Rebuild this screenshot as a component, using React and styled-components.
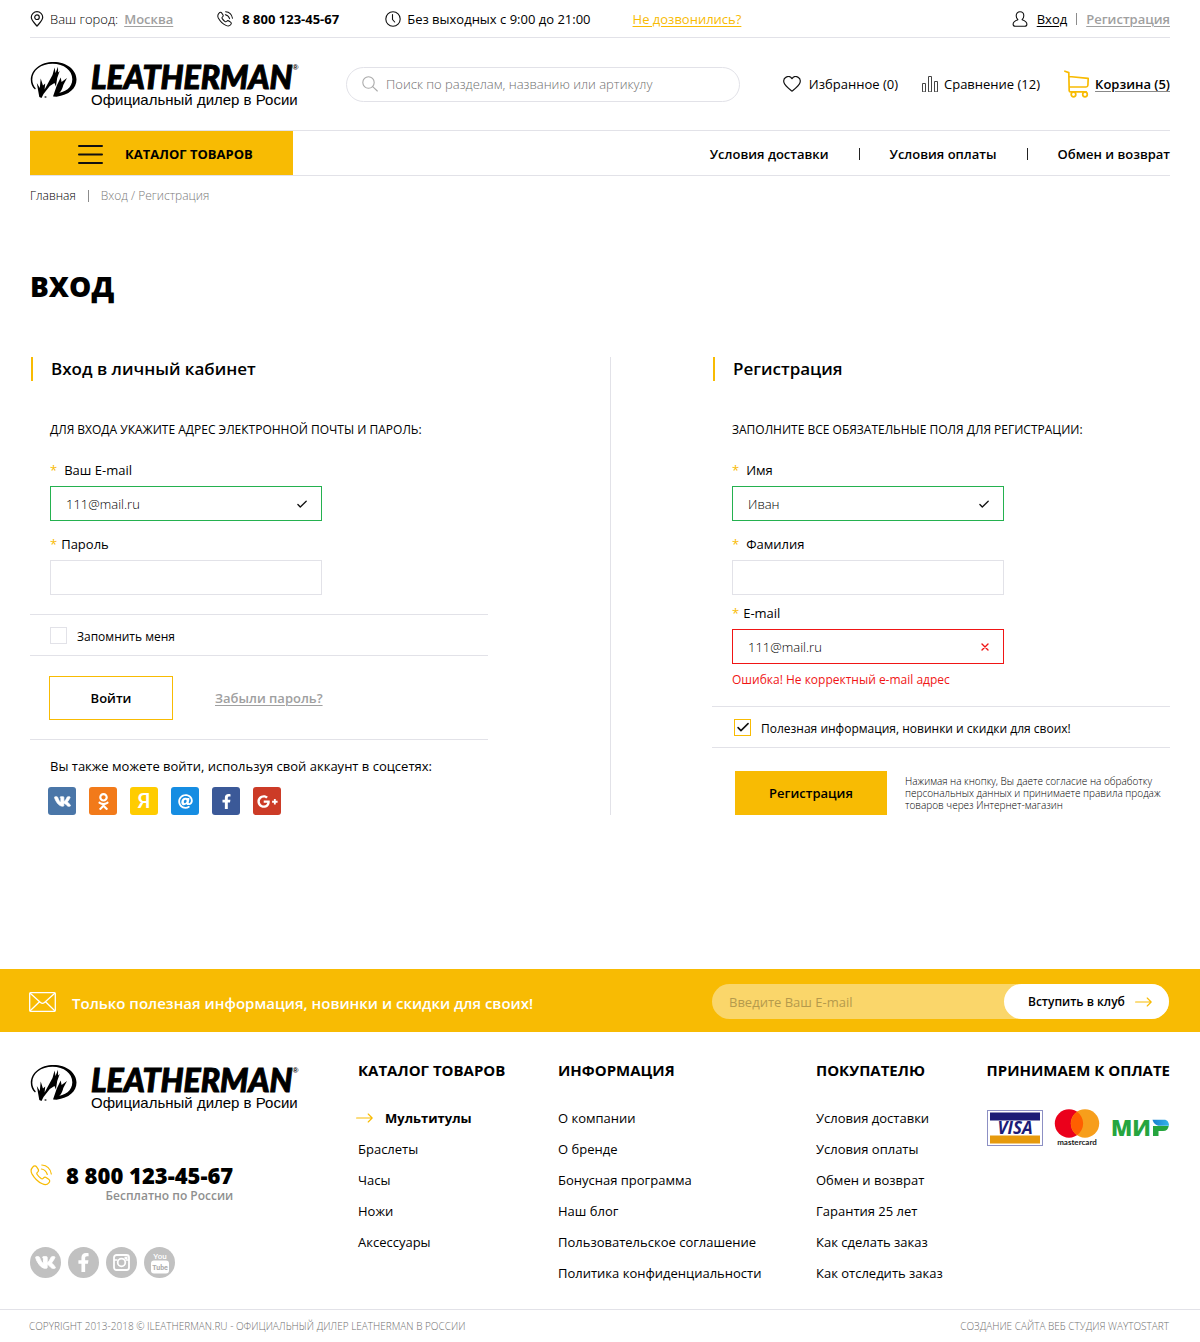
import React from "react";
import styled, { createGlobalStyle } from "styled-components";
import {
  FaVk,
  FaOdnoklassniki,
  FaAt,
  FaFacebookF,
  FaGooglePlusG,
} from "react-icons/fa";

const color = {
  text: "#000",
  muted: "#a0a0a0",
  line: "#e2e2e8",
  brand: "#f8bb03",
  ok: "#24b14f",
  error: "#f01515",
};

const GlobalStyle = createGlobalStyle`
  *, *::before, *::after { box-sizing: border-box; }
  body {
    margin: 0;
    background: #fff;
    color: ${color.text};
    font: 400 13px/20px "Open Sans", "Noto Sans", sans-serif;
  }
  h1, h2, h3, p, ul { margin: 0; padding: 0; }
  ul { list-style: none; }
  button, input { font: inherit; color: inherit; }
  svg { display: block; flex: none; }
`;

const Container = styled.div`
  padding: 0 30px;
`;

const Link = styled.a`
  color: ${(p) => p.$color || "inherit"};
  font-weight: ${(p) => p.$weight || 400};
  text-decoration: ${(p) => (p.$underline ? "underline" : "none")};
  text-decoration-thickness: 1px;
  text-underline-offset: 2px;
`;

/* ---------- top bar ---------- */

const TopBar = styled.div`
  display: flex;
  align-items: center;
  height: 38px;
  border-bottom: 1px solid ${color.line};
`;

const TopItem = styled.div`
  display: flex;
  align-items: center;
  gap: ${(p) => p.$gap}px;
  margin-right: ${(p) => p.$after || 0}px;
  white-space: nowrap;
`;

const Account = styled.div`
  display: flex;
  align-items: center;
  gap: 9px;
  margin-left: auto;
`;

const Separator = styled.span`
  width: 1px;
  height: ${(p) => p.$height || 12}px;
  background: ${(p) => p.$color || "#8c8c8c"};
`;

const Strong = styled.span`
  font-weight: 700;
`;

/* ---------- header ---------- */

const HeaderRow = styled.div`
  display: flex;
  align-items: center;
  height: 92px;
`;

const LogoLink = styled.a`
  display: flex;
  align-items: flex-start;
  gap: 14px;
  width: 273px;
  color: #000;
  text-decoration: none;
`;

const LogoText = styled.span`
  display: block;
`;

const Wordmark = styled.span`
  display: flex;
  align-items: flex-start;
  font: italic 900 32px/32px Lato, sans-serif;
  -webkit-text-stroke: 1px #000;
`;

const Registered = styled.sup`
  font: 700 8px/14px "Liberation Sans", sans-serif;
  -webkit-text-stroke: 0;
`;

const Tagline = styled.span`
  display: block;
  font: 400 15px/14px "Liberation Sans", Arial, sans-serif;
  white-space: nowrap;
`;

const Search = styled.form`
  display: flex;
  align-items: center;
  gap: 8px;
  flex: 0 1 394px;
  height: 35px;
  margin-left: 43px;
  padding: 0 15px;
  border: 1px solid ${color.line};
  border-radius: 18px;
`;

const SearchInput = styled.input`
  flex: 1;
  min-width: 0;
  padding: 0;
  border: 0;
  outline: 0;
  background: none;
  font-weight: 300;
  &::placeholder { color: #6f6f6f; opacity: 1; }
`;

const Tools = styled.div`
  display: flex;
  align-items: center;
  gap: 24px;
  margin-left: auto;
`;

const Tool = styled(Link)`
  display: flex;
  align-items: center;
  gap: ${(p) => p.$gap}px;
  white-space: nowrap;
`;

const Underlined = styled.span`
  text-decoration: underline;
  text-decoration-color: #888;
  text-underline-offset: 2px;
`;

/* ---------- navigation ---------- */

const NavBar = styled.div`
  display: flex;
  align-items: center;
  justify-content: space-between;
  height: 46px;
  border: solid ${color.line};
  border-width: 1px 0;
`;

const CatalogButton = styled.button`
  display: flex;
  align-items: center;
  gap: 22px;
  width: 263px;
  height: 44px;
  padding: 2px 48px 0;
  border: 0;
  background: ${color.brand};
  font-weight: 700;
  white-space: nowrap;
`;

const NavLinks = styled.nav`
  display: flex;
  align-items: center;
  gap: 30px;
  padding-top: 2px;
`;

const Crumbs = styled.nav`
  display: flex;
  align-items: center;
  gap: 12px;
  padding-top: 10px;
  font-size: 12px;
`;

/* ---------- forms ---------- */

const PageTitle = styled.h1`
  margin: 60px 0 51px;
  font-size: 28px;
  line-height: 40px;
  font-weight: 800;
`;

const Columns = styled.div`
  display: flex;
  padding-bottom: 154px;
`;

const Panel = styled.section`
  flex: 1;
  min-width: 0;
`;

const Divider = styled.div`
  width: 1px;
  margin: 0 101px 0 122px;
  background: ${color.line};
`;

const PanelTitle = styled.h2`
  margin-left: 1px;
  padding-left: 18px;
  border-left: 2px solid ${color.brand};
  font-size: 17px;
  line-height: 24px;
  font-weight: 600;
`;

const Hint = styled.p`
  margin: 39px 0 20px;
  padding-left: 20px;
  font-size: 12px;
  text-transform: uppercase;
  white-space: nowrap;
`;

const Fields = styled.div`
  padding-left: 20px;
`;

const Field = styled.div`
  width: 272px;
  margin-top: ${(p) => p.$before || 0}px;
`;

const Label = styled.label`
  display: flex;
  gap: ${(p) => p.$gap}px;
  margin-bottom: 6px;
`;

const Star = styled.span`
  color: ${color.brand};
`;

const InputBox = styled.div`
  display: flex;
  align-items: center;
  height: 35px;
  padding: 0 14px 0 15px;
  border: 1px solid ${(p) => p.$border || color.line};
`;

const TextInput = styled.input`
  flex: 1;
  min-width: 0;
  padding: 0;
  border: 0;
  outline: 0;
  background: none;
  font-weight: 300;
`;

const ErrorText = styled.p`
  margin-top: 6px;
  color: ${color.error};
  font-size: 12px;
`;

const CheckRow = styled.label`
  display: flex;
  align-items: center;
  gap: 10px;
  height: 42px;
  margin-top: ${(p) => p.$before}px;
  padding-left: ${(p) => p.$indent}px;
  border: solid ${color.line};
  border-width: 1px 0;
  font-size: 12px;
`;

const CheckBox = styled.span`
  display: grid;
  place-items: center;
  > * { grid-area: 1 / 1; }
  > svg { pointer-events: none; }
`;

const CheckText = styled.span`
  padding-top: 3px;
`;

const CheckInput = styled.input`
  appearance: none;
  width: 17px;
  height: 17px;
  margin: 0;
  border: 1px solid ${color.line};
  background: #fff;
  &:checked { border-color: ${color.brand}; }
  & + svg { visibility: hidden; }
  &:checked + svg { visibility: visible; }
`;

const LoginActions = styled.div`
  display: flex;
  align-items: center;
  gap: 42px;
  padding: 20px 0 19px 19px;
  border-bottom: 1px solid ${color.line};
`;

const SignupActions = styled.div`
  display: flex;
  align-items: center;
  gap: 18px;
  padding: 23px 0 0 23px;
`;

const Button = styled.button`
  flex: none;
  width: ${(p) => p.$width}px;
  height: 44px;
  border: 1px solid ${color.brand};
  background: ${(p) => (p.$filled ? color.brand : "#fff")};
  font-weight: 600;
`;

const Agreement = styled.p`
  font-size: 10px;
  line-height: 12px;
  font-weight: 300;
`;

const SocialHint = styled.p`
  margin: 16px 0 11px;
  padding-left: 20px;
`;

const SocialLogin = styled.div`
  display: flex;
  gap: 13px;
  padding-left: 18px;
`;

const SocialTile = styled.a`
  display: grid;
  place-items: center;
  width: 28px;
  height: 28px;
  border-radius: 3px;
  background: ${(p) => p.$bg};
  color: #fff;
  font: 500 21px/28px Roboto, sans-serif;
  text-decoration: none;
`;

const BoldVk = styled(FaVk)`
  stroke: currentColor;
  stroke-width: 26px;
  overflow: visible;
`;

/* ---------- subscription ---------- */

const Subscribe = styled.section`
  display: flex;
  align-items: center;
  height: 63px;
  padding: 2px 31px 0 29px;
  background: ${color.brand};
`;

const SubscribeText = styled.h2`
  margin-left: 16px;
  padding-top: 2px;
  color: #fff;
  font-size: 15px;
  line-height: 20px;
  font-weight: 600;
  white-space: nowrap;
`;

const SubscribeForm = styled.form`
  display: flex;
  flex: 0 1 457px;
  height: 35px;
  margin-left: auto;
  border-radius: 18px;
  background: #fad66a;
`;

const SubscribeInput = styled.input`
  flex: 1;
  min-width: 0;
  padding: 0 17px;
  border: 0;
  outline: 0;
  background: none;
  &::placeholder { color: #b59a4c; opacity: 1; }
`;

const JoinButton = styled.button`
  display: flex;
  align-items: center;
  gap: 10px;
  width: 165px;
  padding: 0 0 0 24px;
  border: 0;
  border-radius: 18px;
  background: #fff;
  font-size: 12px;
  font-weight: 600;
  white-space: nowrap;
`;

/* ---------- footer ---------- */

const FooterGrid = styled.div`
  display: grid;
  grid-template-columns: 328px 200px 258px 1fr auto;
  padding: 28px 30px 26px;
`;

const FooterContacts = styled.div`
  display: flex;
  flex-direction: column;
  align-items: flex-start;
  padding-top: 4px;
`;

const FooterPhone = styled.div`
  display: grid;
  grid-template-columns: auto auto;
  align-items: center;
  column-gap: 14px;
  margin-top: 51px;
`;

const PhoneNumber = styled.span`
  font-size: 22px;
  line-height: 28px;
  font-weight: 800;
`;

const PhoneNote = styled.span`
  grid-column: 2;
  color: #8f8f8f;
  font-size: 12px;
  line-height: 14px;
  font-weight: 600;
  text-align: right;
`;

const RoundLinks = styled.div`
  display: flex;
  gap: 7px;
  margin-top: 44px;
`;

const RoundLink = styled.a`
  display: grid;
  place-items: center;
  width: 31px;
  height: 31px;
  border-radius: 50%;
  background: #c1c1c1;
  color: #fff;
`;

const FooterTitle = styled.h3`
  margin-bottom: 28px;
  font-size: 15px;
  line-height: 20px;
  font-weight: 700;
  white-space: nowrap;
`;

const FooterList = styled.ul`
  display: grid;
  gap: 11px;
`;

const FooterItem = styled.li`
  display: flex;
  align-items: center;
  gap: 12px;
  margin-left: ${(p) => (p.$active ? -2 : 0)}px;
`;

const Payments = styled.div`
  display: flex;
  align-items: center;
  gap: 11px;
  margin-top: 29px;
`;

const Legal = styled.div`
  display: flex;
  justify-content: space-between;
  padding: 6px 31px 6px 29px;
  border-top: 1px solid ${color.line};
  color: #707070;
  font-size: 10px;
  font-weight: 300;
  text-transform: uppercase;
`;

/* ---------- icons ---------- */

const Stroke = ({ w, h, box, width = 1.1, stroke = "#111", children }) => (
  <svg
    width={w}
    height={h}
    viewBox={box || `0 0 ${w} ${h}`}
    fill="none"
    stroke={stroke}
    strokeWidth={width}
    strokeLinecap="round"
    strokeLinejoin="round"
    aria-hidden="true"
  >
    {children}
  </svg>
);

const PinIcon = () => (
  <Stroke w={14} h={16} width={1.2}>
    <path d="M7 15.2C4.500 12 1.300 9.200 1.300 6.200a5.700 5.500 0 0 1 11.400 0C12.700 9.200 9.500 12 7 15.200z" />
    <circle cx="7" cy="6.200" r="2.300" />
  </Stroke>
);

const PhoneIcon = ({ size = 16, stroke }) => (
  <Stroke w={size} h={size} box="0 0 22 22" stroke={stroke} width={size > 16 ? 1.2 : 1.4}>
    <path d="M2.800 3c1.400-1.600 2.900-1.400 3.800-.1l1.500 2.200c.8 1.200.5 2.100-.5 3-1 .8-1.100 1.400-.4 2.400 1 1.500 2.300 2.900 3.900 4 .9.600 1.500.5 2.300-.4.900-1 1.900-1.200 3-.4l2.300 1.600c1.200.9 1.400 2.100.1 3.600-1.600 2-3.700 2.300-6.500.9C8.200 18 4.200 13.900 1.800 9.600.5 7 .9 5 2.800 3z" />
    <path d="M11.500 5c3.100.6 5 2.500 5.800 5.500M11.800 1c5 .4 8.600 4 9.500 9" />
  </Stroke>
);

const ClockIcon = () => (
  <Stroke w={16} h={16}>
    <circle cx="8" cy="8" r="7.200" />
    <path d="M7.500 3.500v5l2.200 2.500" />
  </Stroke>
);

const UserIcon = () => (
  <Stroke w={16} h={16}>
    <path d="M8 .8c2.200 0 3.800 1.700 3.800 4 0 1.600-.7 3-1.700 3.900 2 .7 4.800 2 4.800 4.500 0 1.500-.8 2-2.200 2H3.300c-1.400 0-2.200-.5-2.200-2 0-2.500 2.800-3.800 4.800-4.500C4.900 7.800 4.200 6.400 4.200 4.800c0-2.300 1.600-4 3.800-4z" />
  </Stroke>
);

const SearchIcon = () => (
  <Stroke w={16} h={16} stroke="#aaa">
    <circle cx="6.500" cy="6.500" r="5.700" />
    <path d="M10.700 10.700l4.600 4.300" />
  </Stroke>
);

const HeartIcon = () => (
  <Stroke w={18} h={16} width={1.200}>
    <path d="M9 2.700C10.500.4 13.200.3 14.800 1.100c1.900.9 2.800 3.100 2.300 5.200-.8 3.200-5 6.300-8.100 8.800C5.900 12.600 1.700 9.500.9 6.300.4 4.200 1.300 2 3.200 1.100 4.800.3 7.500.4 9 2.700z" />
  </Stroke>
);

const BarsIcon = () => (
  <Stroke w={16} h={16} width={1} stroke="#444">
    <path d="M.5 15.500v-8h3v8zM6.500 15.500V.5h3v15zM12.500 15.500v-10h3v10z" />
  </Stroke>
);

const CartIcon = () => (
  <Stroke w={25} h={28} stroke={color.brand} width={1.700}>
    <path d="M.9 1.200l3.900 1.400.4 18.300M5 6.500l19.200 1.900-.3 6.900c-.1 1.200-.6 1.700-1.800 1.700H5.200M5.200 20.900c.1.700.4.900 1.200.9h15.800" />
    <circle cx="9.500" cy="24.500" r="2.300" />
    <circle cx="21" cy="24.500" r="2.300" />
  </Stroke>
);

const BurgerIcon = () => (
  <Stroke w={25} h={20} width={2}>
    <path d="M1 2h23M1 10.500h23M1 19h23" />
  </Stroke>
);

const CheckIcon = ({ w = 10, h = 8, width = 1.300 }) => (
  <Stroke w={w} h={h} box="0 0 10 8" width={width}>
    <path d="M.9 4.500l2.400 2.500L9.200 1.200" />
  </Stroke>
);

const CrossIcon = () => (
  <Stroke w={8} h={8} stroke="#f01515" width={1.400}>
    <path d="M1 1l6 6M7 1L1 7" />
  </Stroke>
);

const MailIcon = () => (
  <Stroke w={27} h={20} stroke="#fff" width={1.300}>
    <rect x=".7" y=".7" width="25.600" height="18.600" rx="1" />
    <path d="M1.200 1.200l10.300 9.300c1.300 1.200 2.700 1.200 4 0L25.800 1.200M1.200 18.800l9.300-9M25.800 18.800l-9.300-9" />
  </Stroke>
);

const ArrowIcon = () => (
  <Stroke w={17} h={10} stroke={color.brand}>
    <path d="M.6 5h15.600M12.200 1l4 4-4 4" />
  </Stroke>
);

const Emblem = () => (
  <svg width="47" height="38" viewBox="0 0 47 38" aria-hidden="true">
    <path
      fillRule="evenodd"
      d="M5 28.500C2 26 .8 22.500.8 18.800.8 8.800 10.500 1 23.500 1c13 0 23 7.800 23 17.500 0 9-7.500 15.500-20 17.200l-3-.2 1.500-3C35.500 31.500 42.300 26.500 42.300 18.200 42.300 9.500 34 2.800 22.500 2.800 11 2.800 2.300 9.500 2.300 18.600c0 3.400 1.200 6.400 3.500 8.900z"
    />
    <path d="M6.800 22l3 5 .9-9.500 2.300 7 2.200-2-.6 6L22.500 14l2.100-7.500.9 5.500L28 5.800l.1 5.700 1.600-1.500-2.500 7-1.300 8.500-1.400-3.500-4.700 3L13.500 33l-2 4-2.200-1z" />
    <path d="M23 35.500l3.800-11 3.900-8 .9 4.500 5.400-4-3.700 7c-1.300 5.500-3.500 9.500-10.300 11.500z" />
    <circle cx="15.500" cy="36" r="1.100" fill="#555" />
  </svg>
);

const InstagramIcon = () => (
  <svg width="17" height="17" viewBox="0 0 17 17" fill="none" stroke="#fff" aria-hidden="true">
    <rect x="1" y="1" width="15" height="15" rx="2.500" strokeWidth="1.800" />
    <path d="M1 6h3.500M12.500 6H16" strokeWidth="1.500" />
    <circle cx="8.500" cy="8.500" r="3.800" strokeWidth="1.800" />
    <rect x="11.500" y="2.700" width="3" height="2.500" fill="#fff" stroke="none" />
  </svg>
);

const YoutubeIcon = () => (
  <svg width="18" height="23" viewBox="0 0 18 23" aria-hidden="true">
    <text x="9" y="8" textAnchor="middle" fontFamily="Roboto, sans-serif" fontSize="8" fontWeight="500" fill="#fff">You</text>
    <rect x="0" y="9.500" width="18" height="13" rx="3" fill="#fff" />
    <text x="9" y="19" textAnchor="middle" fontFamily="Roboto, sans-serif" fontSize="7" fontWeight="700" fill="#ababab">Tube</text>
  </svg>
);

const VisaLogo = () => (
  <svg width="56" height="36" viewBox="0 0 56 36" role="img" aria-label="Visa">
    <rect x=".5" y=".5" width="55" height="35" fill="#fff" stroke="#8d90c4" />
    <rect x="3" y="2.500" width="50" height="8" fill="#1c1c76" />
    <rect x="3" y="25.500" width="50" height="8" fill="#e69a0c" />
    <text x="28" y="24" textAnchor="middle" fontFamily="Open Sans, sans-serif" fontStyle="italic" fontWeight="700" fontSize="17" fill="#1c1c76">VISA</text>
  </svg>
);

const MastercardLogo = () => (
  <svg width="46" height="38" viewBox="0 0 46 38" role="img" aria-label="Mastercard">
    <circle cx="15" cy="14.500" r="14.200" fill="#eb001b" />
    <circle cx="31" cy="14.500" r="14.200" fill="#f79e1b" />
    <path d="M23 2.800a14.200 14.200 0 0 1 0 23.400 14.200 14.200 0 0 1 0-23.400z" fill="#ff5f00" />
    <text x="23" y="36" textAnchor="middle" fontFamily="Lato, sans-serif" fontWeight="700" fontSize="8" fill="#1a1a1a">mastercard</text>
  </svg>
);

const MirLogo = () => (
  <svg width="58" height="26" viewBox="0 -4 58 26" role="img" aria-label="Мир">
    <defs>
      <linearGradient id="mir" x1="0" x2="1">
        <stop offset="0" stopColor="#1a7fd0" />
        <stop offset="1" stopColor="#35b5ea" />
      </linearGradient>
    </defs>
    <text x="0" y="17" fontFamily="Open Sans, sans-serif" fontWeight="800" fontSize="22" fill="#26a53f">МИ</text>
    <path d="M42 7v10h5.500V12h4.500c3.500 0 5.200-2 5.700-5z" fill="#26a53f" />
    <path d="M41.500 .8h11.500c3.500 0 5 2.700 5 6H48.500c-3.500 0-6-2.500-7-6z" fill="url(#mir)" />
  </svg>
);

/* ---------- composed parts ---------- */

const Logo = () => (
  <LogoLink href="#">
    <Emblem />
    <LogoText>
      <Wordmark>
        LEATHERMAN<Registered>®</Registered>
      </Wordmark>
      <Tagline>Официальный дилер в Росии</Tagline>
    </LogoText>
  </LogoLink>
);

const FormField = ({ id, label, gap = 7, type = "text", value = "", state, before, error }) => (
  <Field $before={before}>
    <Label htmlFor={id} $gap={gap}>
      <Star>*</Star>
      {label}
    </Label>
    <InputBox $border={color[state]}>
      <TextInput id={id} type={type} defaultValue={value} aria-invalid={state === "error"} />
      {state === "ok" && <CheckIcon />}
      {state === "error" && <CrossIcon />}
    </InputBox>
    {error && <ErrorText>{error}</ErrorText>}
  </Field>
);

const Check = ({ label, checked, before, indent }) => (
  <CheckRow $before={before} $indent={indent}>
    <CheckBox>
      <CheckInput type="checkbox" defaultChecked={checked} />
      <CheckIcon w={12} h={10} />
    </CheckBox>
    <CheckText>{label}</CheckText>
  </CheckRow>
);

const FooterColumn = ({ title, items, active }) => (
  <div>
    <FooterTitle>{title}</FooterTitle>
    <FooterList>
      {items.map((item) => (
        <FooterItem key={item} $active={item === active}>
          {item === active && <ArrowIcon />}
          <Link href="#" $weight={item === active ? 700 : 400}>{item}</Link>
        </FooterItem>
      ))}
    </FooterList>
  </div>
);

const socials = [
  { name: "ВКонтакте", bg: "#4a76a8", icon: <BoldVk size={17} /> },
  { name: "Одноклассники", bg: "#f27a1a", icon: <FaOdnoklassniki size={17} /> },
  { name: "Яндекс", bg: "#ffcc00", icon: "Я" },
  { name: "Mail.ru", bg: "#168de2", icon: <FaAt size={15} /> },
  { name: "Facebook", bg: "#3b5998", icon: <FaFacebookF size={15} /> },
  { name: "Google+", bg: "#cc3b27", icon: <FaGooglePlusG size={21} /> },
];

export default function App() {
  const stop = (e) => e.preventDefault();
  return (
    <>
      <GlobalStyle />
      <Container as="header">
        <TopBar>
          <TopItem $gap={6} $after={44}>
            <PinIcon />
            <Link as="span" $weight={300}>Ваш город:</Link>
            <Link href="#" $color={color.muted} $weight={600} $underline>Москва</Link>
          </TopItem>
          <TopItem $gap={9} $after={46}>
            <PhoneIcon />
            <Strong>8 800 123-45-67</Strong>
          </TopItem>
          <TopItem $gap={6} $after={42}>
            <ClockIcon />
            Без выходных с 9:00 до 21:00
          </TopItem>
          <Link href="#" $color={color.brand} $underline>Не дозвонились?</Link>
          <Account>
            <UserIcon />
            <Link href="#" $underline>Вход</Link>
            <Separator />
            <Link href="#" $color={color.muted} $weight={600} $underline>Регистрация</Link>
          </Account>
        </TopBar>

        <HeaderRow>
          <Logo />
          <Search onSubmit={stop} role="search">
            <SearchIcon />
            <SearchInput
              type="search"
              aria-label="Поиск"
              placeholder="Поиск по разделам, названию или артикулу"
            />
          </Search>
          <Tools>
            <Tool href="#" $gap={8}>
              <HeartIcon />
              Избранное (0)
            </Tool>
            <Tool href="#" $gap={6}>
              <BarsIcon />
              Сравнение (12)
            </Tool>
            <Tool href="#" $gap={6} $weight={600}>
              <CartIcon />
              <Underlined>Корзина (5)</Underlined>
            </Tool>
          </Tools>
        </HeaderRow>

        <NavBar>
          <CatalogButton type="button">
            <BurgerIcon />
            КАТАЛОГ ТОВАРОВ
          </CatalogButton>
          <NavLinks>
            <Link href="#" $weight={600}>Условия доставки</Link>
            <Separator $color="#222" />
            <Link href="#" $weight={600}>Условия оплаты</Link>
            <Separator $color="#222" />
            <Link href="#" $weight={600}>Обмен и возврат</Link>
          </NavLinks>
        </NavBar>
      </Container>

      <Container as="main">
        <Crumbs>
          <Link href="#" $weight={300}>Главная</Link>
          <Separator />
          <Link as="span" $color="#7a7a7a" $weight={300}>Вход / Регистрация</Link>
        </Crumbs>
        <PageTitle>ВХОД</PageTitle>

        <Columns>
          <Panel>
            <PanelTitle>Вход в личный кабинет</PanelTitle>
            <form onSubmit={stop}>
              <Hint>Для входа укажите адрес электронной почты и пароль:</Hint>
              <Fields>
                <FormField id="login-email" label="Ваш E-mail" value="111@mail.ru" state="ok" />
                <FormField id="login-password" label="Пароль" type="password" gap={4} before={13} />
              </Fields>
              <Check label="Запомнить меня" before={19} indent={20} />
              <LoginActions>
                <Button type="submit" $width={124}>Войти</Button>
                <Link href="#" $color={color.muted} $weight={600} $underline>Забыли пароль?</Link>
              </LoginActions>
            </form>
            <SocialHint>Вы также можете войти, используя свой аккаунт в соцсетях:</SocialHint>
            <SocialLogin>
              {socials.map((s) => (
                <SocialTile key={s.name} href="#" aria-label={s.name} $bg={s.bg}>{s.icon}</SocialTile>
              ))}
            </SocialLogin>
          </Panel>

          <Divider />

          <Panel>
            <PanelTitle>Регистрация</PanelTitle>
            <form onSubmit={stop}>
              <Hint>Заполните все обязательные поля для регистрации:</Hint>
              <Fields>
                <FormField id="reg-name" label="Имя" value="Иван" state="ok" />
                <FormField id="reg-surname" label="Фамилия" before={13} />
                <FormField
                  id="reg-email"
                  label="E-mail"
                  value="111@mail.ru"
                  gap={4}
                  before={8}
                  state="error"
                  error="Ошибка! Не корректный e-mail адрес"
                />
              </Fields>
              <Check
                label="Полезная информация, новинки и скидки для своих!"
                checked
                before={16}
                indent={22}
              />
              <SignupActions>
                <Button type="submit" $width={152} $filled>Регистрация</Button>
                <Agreement>
                  Нажимая на кнопку, Вы даете согласие на обработку персональных данных и
                  принимаете правила продаж товаров через Интернет-магазин
                </Agreement>
              </SignupActions>
            </form>
          </Panel>
        </Columns>
      </Container>

      <Subscribe>
        <MailIcon />
        <SubscribeText>Только полезная информация, новинки и скидки для своих!</SubscribeText>
        <SubscribeForm onSubmit={stop}>
          <SubscribeInput type="email" aria-label="E-mail" placeholder="Введите Ваш E-mail" />
          <JoinButton type="submit">
            Вступить в клуб
            <ArrowIcon />
          </JoinButton>
        </SubscribeForm>
      </Subscribe>

      <footer>
        <FooterGrid>
          <FooterContacts>
            <Logo />
            <FooterPhone>
              <PhoneIcon size={22} stroke={color.brand} />
              <PhoneNumber>8 800 123-45-67</PhoneNumber>
              <PhoneNote>Бесплатно по России</PhoneNote>
            </FooterPhone>
            <RoundLinks>
              <RoundLink href="#" aria-label="ВКонтакте"><BoldVk size={21} /></RoundLink>
              <RoundLink href="#" aria-label="Facebook"><FaFacebookF size={19} /></RoundLink>
              <RoundLink href="#" aria-label="Instagram"><InstagramIcon /></RoundLink>
              <RoundLink href="#" aria-label="YouTube"><YoutubeIcon /></RoundLink>
            </RoundLinks>
          </FooterContacts>
          <FooterColumn
            title="КАТАЛОГ ТОВАРОВ"
            active="Мультитулы"
            items={["Мультитулы", "Браслеты", "Часы", "Ножи", "Аксессуары"]}
          />
          <FooterColumn
            title="ИНФОРМАЦИЯ"
            items={[
              "О компании",
              "О бренде",
              "Бонусная программа",
              "Наш блог",
              "Пользовательское соглашение",
              "Политика конфиденциальности",
            ]}
          />
          <FooterColumn
            title="ПОКУПАТЕЛЮ"
            items={[
              "Условия доставки",
              "Условия оплаты",
              "Обмен и возврат",
              "Гарантия 25 лет",
              "Как сделать заказ",
              "Как отследить заказ",
            ]}
          />
          <div>
            <FooterTitle>ПРИНИМАЕМ К ОПЛАТЕ</FooterTitle>
            <Payments>
              <VisaLogo />
              <MastercardLogo />
              <MirLogo />
            </Payments>
          </div>
        </FooterGrid>
        <Legal>
          <span>Copyright 2013-2018 © iLeatherman.ru - официальный дилер Leatherman в России</span>
          <span>Создание сайта веб студия WayToStart</span>
        </Legal>
      </footer>
    </>
  );
}
